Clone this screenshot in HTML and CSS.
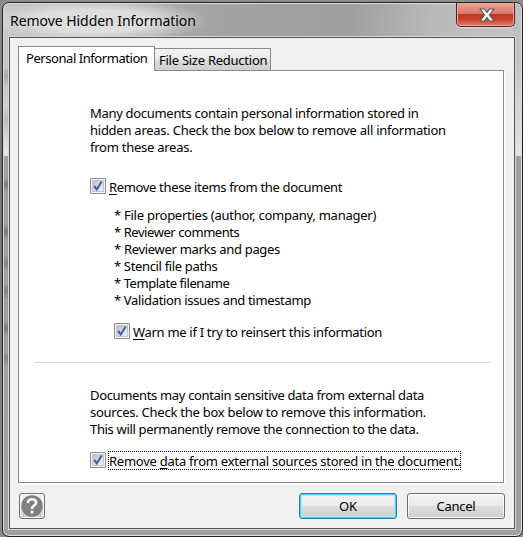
FILE: index.html
```
<!DOCTYPE html>
<html lang="en">
<head>
<meta charset="utf-8">
<title>Remove Hidden Information</title>
<link rel="stylesheet" href="styles.css">
</head>
<body>
<div class="window">
  <header class="titlebar">
    <h1 class="title">Remove Hidden Information</h1>
    <button class="close" aria-label="Close">
      <svg width="16" height="14" viewBox="0 0 16 14"><path d="M1 1H5.4L8 4.4L10.6 1H15L10.4 7L15 13H10.6L8 9.6L5.4 13H1L5.6 7Z" fill="#f6f6f6" stroke="#545866" stroke-width="1.1" stroke-linejoin="round"/></svg>
    </button>
  </header>
  <main class="client">
    <nav class="tabs">
      <div class="tab active"><span class="tightest">Personal Information</span></div>
      <div class="tab"><span class="snug">File Size Reduction</span></div>
    </nav>
    <section class="panel">
      <p class="text intro"><span class="tight">Many documents contain personal information stored in</span><br><span class="snug">hidden areas. Check the box below to remove all information</span><br><span class="snug">from these areas.</span></p>
      <div class="check first">
        <svg class="box" width="16" height="16" viewBox="0 0 16 16"><use href="#checkbox"/></svg>
        <span class="label tighter"><u>R</u>emove these items from the document</span>
      </div>
      <ul class="items">
        <li class="snug">* File properties (author, company, manager)</li>
        <li class="tightest">* Reviewer comments</li>
        <li class="tight">* Reviewer marks and pages</li>
        <li class="tighter">* Stencil file paths</li>
        <li class="tightest">* Template filename</li>
        <li class="tighter">* Validation issues and timestamp</li>
      </ul>
      <div class="check warn">
        <svg class="box" width="16" height="16" viewBox="0 0 16 16"><use href="#checkbox"/></svg>
        <span class="label tight"><u>W</u>arn me if I try to reinsert this information</span>
      </div>
      <hr class="divider">
      <p class="text external"><span class="tighter">Documents may contain sensitive data from external data</span><br><span class="snug">sources. Check the box below to remove this information.</span><br><span class="tighter">This will permanently remove the connection to the data.</span></p>
      <div class="check last">
        <svg class="box" width="16" height="16" viewBox="0 0 16 16"><use href="#checkbox"/></svg>
        <span class="label focused snug">Remove <u>d</u>ata from external sources stored in the document.</span>
      </div>
    </section>
    <footer class="actions">
      <button class="help" aria-label="Help">
        <svg width="22" height="22" viewBox="0 0 22 22"><circle cx="11" cy="11" r="10.8" fill="#808080"/><path d="M6.8 8.2C7 5.4 8.8 4.2 11 4.2C13.4 4.2 15.1 5.5 15.1 7.6C15.1 10.6 11 10.6 11 13.9" fill="none" stroke="#fff" stroke-width="2.5"/><path d="M9.7 15.6h2.7v2.7H9.7z" fill="#fff"/></svg>
      </button>
      <button class="button default">OK</button>
      <button class="button snug">Cancel</button>
    </footer>
  </main>
</div>
<svg class="defs" width="0" height="0">
  <defs>
    <linearGradient id="well" x1="0" y1="0" x2="1" y2="1"><stop offset="0" stop-color="#b7bdc8"/><stop offset="1" stop-color="#f4f5f7"/></linearGradient>
    <g id="checkbox">
      <path d="M.5.5h15v15H.5z" fill="#f4f4f4" stroke="#8e8f8f"/>
      <path d="M2.5 2.5h11v11h-11z" fill="url(#well)" stroke="#c1c6d0"/>
      <path d="M4.2 8L6.8 11.5L11.7 3.5" fill="none" stroke="#4960a0" stroke-width="2.1"/>
    </g>
  </defs>
</svg>
</body>
</html>
```
FILE: styles.css
```
* { box-sizing: border-box; }
body {
  margin: 0;
  width: 523px;
  height: 537px;
  padding: 2px 0 0 2px;
  overflow: hidden;
  background: linear-gradient(#8c8c8c, #777 30%, #8a8a8a);
  font: 13px/17px "Noto Sans", sans-serif;
  color: #000;
}
.window {
  width: 521px;
  height: 535px;
  padding: 0 7px 7px 6px;
  border: 1px solid #222;
  border-radius: 7px;
  box-shadow: inset 0 0 0 1px #dedede;
  background:
    radial-gradient(ellipse 115px 22px at 90px 18px, #dedede 50%, transparent 100%) no-repeat 0 0 / 220px 35px,
    linear-gradient(transparent 175px, #7c7c7c 181px, transparent 189px, transparent 220px, #7c7c7c 229px, transparent 238px, transparent 252px, #848484 260px, transparent 268px, transparent 280px, #808080 288px, transparent 297px, transparent 316px, #7c7c7c 325px, transparent 334px, transparent 347px, #868686 355px, transparent 364px) no-repeat 0 0 / 7px 400px,
    linear-gradient(#c6c6c6, #c4c4c4 42%, #a9a9a9 47%, #c6c6c6 55%, #cfcfcf 68%, #bababa 75%, #e2e2e2 95%) no-repeat 0 0 / 8px 153px,
    linear-gradient(#bdbdbd, #c3c3c3 35%, #e4e4e4) no-repeat 100% 0 / 9px 153px,
    linear-gradient(100deg, #c2c2c2, #a3a3a3 41%, #9e9e9e 66%, #bababa 83%, #c4c4c4) no-repeat 0 0 / 100% 36px,
    #a0a0a0;
}
.snug { letter-spacing: -.255px; }
.tight { letter-spacing: -.305px; }
.tighter { letter-spacing: -.34px; }
.tightest { letter-spacing: -.44px; }
.titlebar { display: flex; justify-content: space-between; height: 34px; }
.title {
  margin: 8px 0 0 1px;
  font-size: 14px;
  line-height: 19px;
  font-weight: 400;
  white-space: nowrap;
  letter-spacing: -.05px;
}
.close {
  display: flex;
  justify-content: center;
  align-items: center;
  width: 59px;
  height: 24px;
  padding: 0 0 0 2px;
  border: 1px solid #4b2222;
  border-top: 0;
  border-radius: 0 0 5px 5px;
  box-shadow: inset 0 0 0 1px #eba999, 0 1px 0 #ddd;
  background: linear-gradient(#eaa69a, #d9796b 46%, #bd3823 48%, #c9402a 70%, #de7f6b);
}
.client {
  width: 506px;
  height: 492px;
  border: 1px solid #545454;
  padding: 8px 10px 0 8px;
  background: #f0f0f0;
  box-shadow: 0 0 0 1px #d8d8d8;
}
.tabs { display: flex; align-items: flex-end; height: 24px; }
.tab {
  height: 22px;
  width: 116px;
  padding: 3px 0 0 4px;
  border: 1px solid #898994;
  border-left: 0;
  border-bottom: 0;
  background: linear-gradient(#f2f2f2, #ebebeb 48%, #dcdcdc 52%, #cfcfcf);
  white-space: nowrap;
}
.tab.active {
  position: relative;
  width: 137px;
  height: 25px;
  margin-bottom: -1px;
  padding: 3px 0 0 7px;
  border-left: 1px solid #898994;
  background: #fff;
}
.panel {
  width: 486px;
  height: 413px;
  padding: 34px 13px 0 15px;
  border: 1px solid #898994;
  background: #fff;
  box-shadow: 2px 2px 0 #fafafa;
  white-space: nowrap;
}
.text { margin: 0 0 0 56px; height: 51px; }
.check { display: flex; align-items: flex-start; height: 18px; margin-left: 56px; }
.box { flex: none; }
.label { margin: 1px 0 0 3px; }
.label u { text-underline-offset: 2px; text-decoration-thickness: 1px; }
.first { margin-top: 22px; }
.items { list-style: none; margin: 11px 0 0 80px; padding: 0; height: 102px; }
.warn { margin: 14px 0 0 80px; }
.divider { height: 1px; margin: 21px 0 0; border: 0; background: #d5dfe5; }
.external { margin-top: 24px; }
.last { margin-top: 14px; }
.focused { width: 353px; height: 19px; margin: -1px 0 0 2px; padding-top: 1px; border: 1px dotted #000; }
.actions { display: flex; align-items: center; padding-top: 10px; }
.help, .button {
  height: 26px;
  border: 1px solid #707070;
  border-radius: 3px;
  background: linear-gradient(#f2f2f2, #ebebeb 48%, #dddddd 50%, #cfcfcf);
  box-shadow: inset 0 0 0 1px #fafafa;
  color: #000;
  font: inherit;
}
.help { display: flex; width: 26px; margin: 0 254px 0 1px; padding: 1px; }
.help svg { flex: none; }
.button { flex: none; width: 98px; padding: 0; }
.button.snug { letter-spacing: -.255px; }
.button + .button { margin-left: 10px; }
.default { border-color: #3c7fb1; box-shadow: inset 0 0 0 1px #3fcaf7, inset 0 0 1px 2px #b9e6f5; }
.defs { position: absolute; }
```
